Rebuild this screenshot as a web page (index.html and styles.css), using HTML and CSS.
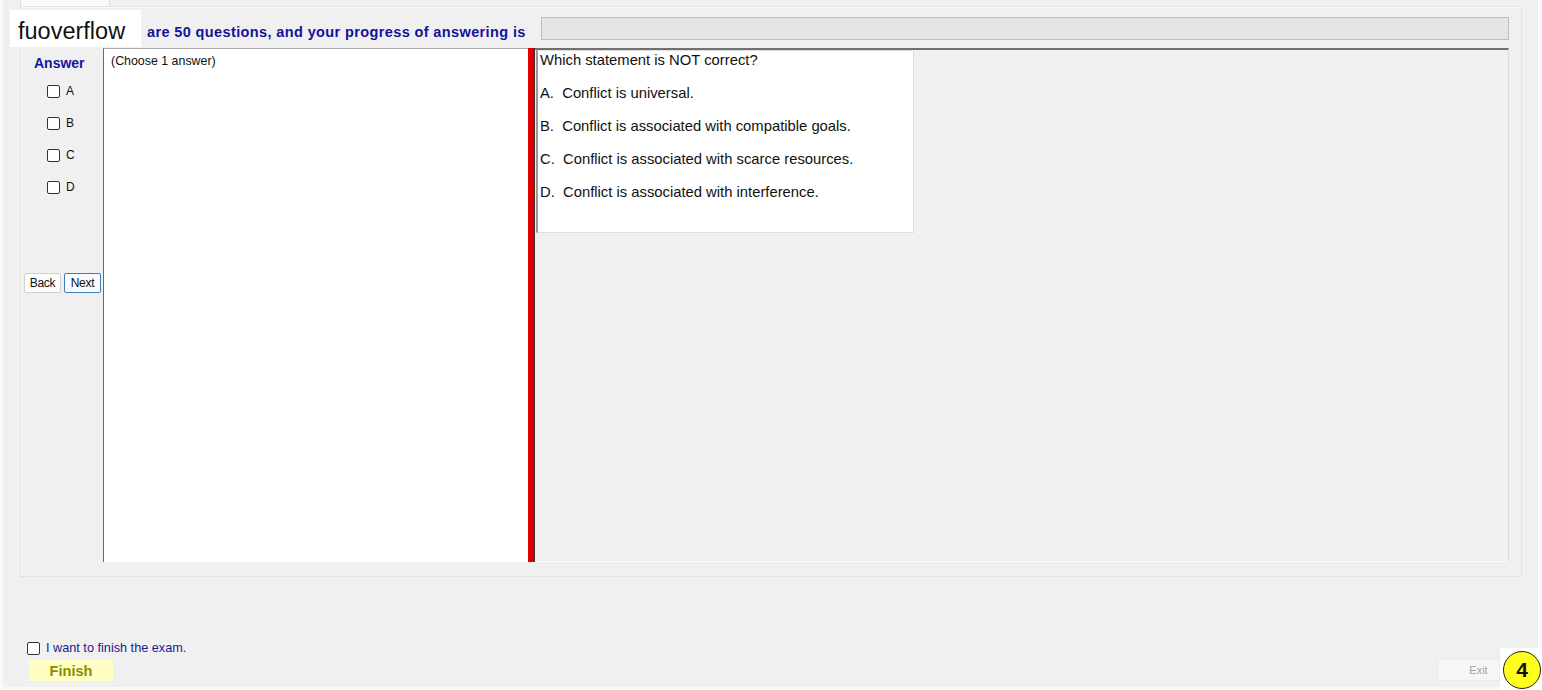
FILE: index.html
```html
<!DOCTYPE html>
<html>
<head>
<meta charset="utf-8">
<link rel="stylesheet" href="styles.css">
</head>
<body>
<div class="window">
  <div class="tabstrip"><div class="tab"></div></div>
  <div class="group">
    <div class="head">
      <div class="heading">are 50 questions, and your progress of answering is</div>
      <div class="progress"></div>
    </div>
    <div class="main">
      <div class="answers">
        <div class="ans-title">Answer</div>
        <label class="opt"><span class="box"></span><span>A</span></label>
        <label class="opt"><span class="box"></span><span>B</span></label>
        <label class="opt"><span class="box"></span><span>C</span></label>
        <label class="opt"><span class="box"></span><span>D</span></label>
        <div class="nav">
          <button class="btn">Back</button>
          <button class="btn btn-focus">Next</button>
        </div>
      </div>
      <div class="left">(Choose 1 answer)</div>
      <div class="divider"></div>
      <div class="right">
        <div class="qbox">
          <div class="qline">Which statement is NOT correct?</div>
          <div class="qline">A.  Conflict is universal.</div>
          <div class="qline">B.  Conflict is associated with compatible goals.</div>
          <div class="qline">C.  Conflict is associated with scarce resources.</div>
          <div class="qline">D.  Conflict is associated with interference.</div>
        </div>
      </div>
    </div>
  </div>
  <div class="footer">
    <div class="finish-col">
      <label class="finish-check"><span class="box"></span><span>I want to finish the exam.</span></label>
      <button class="finish-btn">Finish</button>
    </div>
    <button class="exit-btn">Exit</button>
  </div>
  <div class="brand">fuoverflow</div>
</div>
<div class="badge-wrap"><div class="badge">4</div></div>
</body>
</html>
```
FILE: styles.css
```css
html, body {
  margin: 0;
  padding: 0;
}
body {
  width: 1542px;
  height: 690px;
  background: #f9f9f9;
  font-family: "Liberation Sans", Arial, sans-serif;
  position: relative;
  overflow: hidden;
}
.window {
  position: relative;
  margin-left: 3px;
  width: 1535px;
  height: 687px;
  background: #f0f0f0;
  box-sizing: border-box;
}
.tabstrip {
  height: 6px;
}
.tab {
  margin-left: 17px;
  width: 90px;
  height: 6px;
  background: #fbfbfb;
  border: 1px solid #dcdcdc;
  border-top: none;
  border-bottom: none;
  box-sizing: border-box;
}
.group {
  margin-left: 17px;
  width: 1502px;
  height: 571px;
  box-sizing: border-box;
  padding: 0 12px 14px 1px;
  border: 1px solid #e2e2e2;
  box-shadow: inset 1px 1px 0 #fbfbfb;
  display: flex;
  flex-direction: column;
}
.head {
  height: 41px;
  display: flex;
  align-items: flex-start;
  flex: none;
}
.heading {
  margin-left: 125px;
  margin-top: 16px;
  width: 394px;
  line-height: 18px;
  font-size: 14.5px;
  letter-spacing: 0.38px;
  font-weight: bold;
  color: #13139a;
  white-space: nowrap;
}
.progress {
  flex: 1;
  margin-top: 10px;
  height: 23px;
  background: #e5e5e5;
  border: 1px solid #bdbdbd;
  box-sizing: border-box;
}
.main {
  flex: 1;
  display: flex;
  min-height: 0;
}
.answers {
  width: 81px;
  flex: none;
  display: flex;
  flex-direction: column;
}
.ans-title {
  margin-top: 6px;
  padding-left: 12px;
  font-size: 14px;
  font-weight: bold;
  line-height: 18px;
  color: #1414a0;
}
.opt {
  display: flex;
  align-items: center;
  gap: 6px;
  padding-left: 25px;
  height: 32px;
  font-size: 12px;
  color: #111;
}
.opt:first-of-type {
  margin-top: 3px;
}
.box {
  display: inline-block;
  width: 13px;
  height: 13px;
  box-sizing: border-box;
  border: 1px solid #333;
  border-radius: 2px;
  background: #fff;
  flex: none;
}
.nav {
  margin-top: 70px;
  padding-left: 2px;
  display: flex;
  gap: 3px;
}
.btn {
  width: 37px;
  height: 20px;
  padding: 0;
  font-family: "Liberation Sans", Arial, sans-serif;
  font-size: 12px;
  color: #111;
  background: #fdfdfd;
  border: 1px solid #d0d0d0;
  border-radius: 2px;
  letter-spacing: -0.3px;
}
.btn-focus {
  border-color: #3d7fb5;
  background: #f7fbff;
}
.left {
  width: 425px;
  flex: none;
  background: #fff;
  border-left: 1px solid #6a6a6a;
  border-top: 1px solid #a8a8a8;
  box-sizing: border-box;
  padding: 4px 0 0 7px;
  font-size: 12.4px;
  line-height: 16px;
  color: #111;
}
.divider {
  width: 5px;
  flex: none;
  background: #e00000;
  border-right: 2px solid #4a3030;
}
.right {
  flex: 1;
  background: #f0f0f0;
  border-top: 2px solid #707070;
  border-right: 1px solid #dadada;
  border-bottom: 1px solid #fafafa;
  box-sizing: border-box;
  padding: 0 0 0 1px;
}
.qbox {
  width: 378px;
  height: 183px;
  box-sizing: border-box;
  background: #fff;
  border: 1px solid #dedede;
  border-left: 2px solid #9a9a9a;
  padding: 0 0 0 2px;
}
.qline {
  font-size: 14.8px;
  line-height: 33px;
  height: 33px;
  color: #111;
  white-space: pre;
}
.qline:first-child {
  margin-top: -7px;
}
.footer {
  display: flex;
  justify-content: space-between;
  align-items: flex-end;
  padding: 0 38px 6px 24px;
  height: 110px;
  box-sizing: border-box;
}
.finish-col {
  display: flex;
  flex-direction: column;
}
.finish-check {
  display: flex;
  align-items: center;
  gap: 6px;
  font-size: 12.7px;
  color: #1a1a90;
}
.finish-btn {
  margin-top: 5px;
  margin-left: 2px;
  width: 84px;
  height: 21px;
  padding: 0;
  border: none;
  background: #ffffc4;
  color: #8c8c00;
  font-family: "Liberation Sans", Arial, sans-serif;
  font-weight: bold;
  font-size: 14.6px;
}
.exit-btn {
  width: 63px;
  height: 22px;
  padding: 0 0 0 20px;
  border: 1px solid #ebebeb;
  background: #f6f6f6;
  color: #a3a3a3;
  font-family: "Liberation Sans", Arial, sans-serif;
  font-size: 11px;
  margin-bottom: 0;
}
.brand {
  position: absolute;
  left: 7px;
  top: 10px;
  width: 131px;
  height: 37px;
  background: #fff;
  box-sizing: border-box;
  padding: 3px 0 0 8px;
  font-size: 23.5px;
  line-height: 37px;
  color: #111;
  overflow: hidden;
}
.badge-wrap {
  position: absolute;
  left: 1500px;
  top: 648px;
  width: 42px;
  height: 42px;
  background: #fff;
}
.badge {
  position: absolute;
  left: 3px;
  top: 3px;
  width: 38px;
  height: 38px;
  box-sizing: border-box;
  border-radius: 50%;
  border: 1.5px solid #222;
  background: #ffff1e;
  display: flex;
  align-items: center;
  justify-content: center;
  font-size: 21px;
  font-weight: bold;
  color: #111;
}
```
